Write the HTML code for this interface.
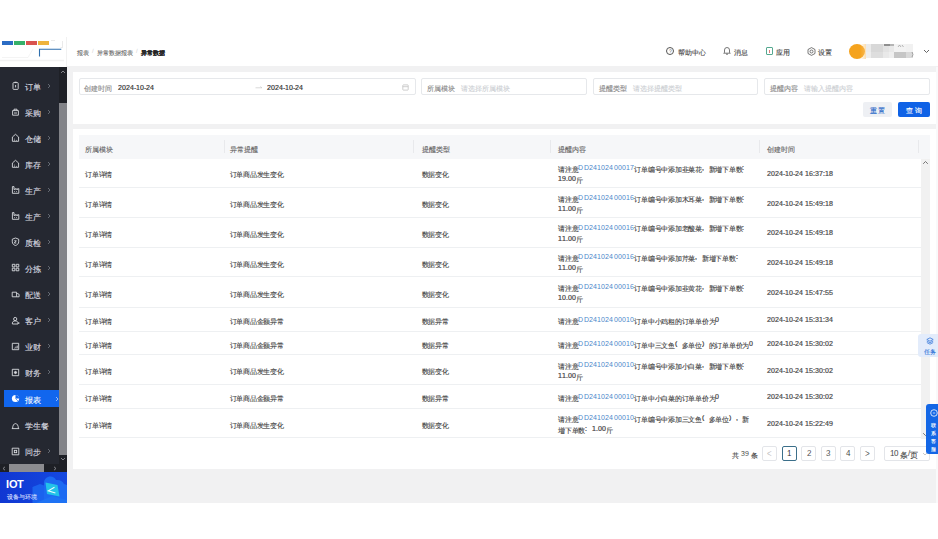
<!DOCTYPE html><html><head><meta charset="utf-8"><style>
*{margin:0;padding:0;box-sizing:border-box}
@font-face{font-family:"Liberation Sans";src:local("Liberation Sans"),local("LiberationSans");font-weight:400;unicode-range:U+0000-2FFF,U+3040-33FF,U+A000-FEFF,U+FFF0-10FFFF}
@font-face{font-family:"Liberation Sans";src:local("Liberation Sans Bold"),local("LiberationSans-Bold");font-weight:700;unicode-range:U+0000-2FFF,U+3040-33FF,U+A000-FEFF,U+FFF0-10FFFF}
@font-face{font-family:"Liberation Sans";src:local("Liberation Sans"),local("LiberationSans");font-weight:400;size-adjust:133.33%;unicode-range:U+3000-303F,U+3400-9FFF,U+FF00-FFEF}
@font-face{font-family:"Liberation Sans";src:local("Liberation Sans Bold"),local("LiberationSans-Bold");font-weight:700;size-adjust:133.33%;unicode-range:U+3000-303F,U+3400-9FFF,U+FF00-FFEF}
html,body{width:938px;height:539px;overflow:hidden;background:#fff;font-family:"Liberation Sans",sans-serif}
body{position:relative}
.a{position:absolute;white-space:nowrap}
.mi{position:absolute;left:0;width:59px;height:17px;color:#d9dbe0;font-size:8px;line-height:17px}
.mi svg{position:absolute;left:10.5px;top:4.3px}
.mi svg.ar{left:46.5px;top:5.5px}
.mi .tx{position:absolute;left:25px;top:0}
.mi .ar{position:absolute;left:46px;top:-0.5px;font-size:7px;color:#8d929c}
.mi.act{background:#1166ee;color:#fff}
.mi.act .ar{left:54px;color:#d5e4ff}
.inp{position:absolute;top:78.3px;height:17px;border:1px solid #e6e8eb;border-radius:2px;background:#fff;font-size:7px;line-height:15px;color:#333}
.inp span{top:1px!important}
.inp .lb{position:absolute;left:4.6px;top:0;color:#8a8a8a}
.inp .ph{position:absolute;top:0;color:#cdd0d4}
.btn{position:absolute;top:102px;height:15px;font-size:7px;line-height:15px;text-align:center;border-radius:2px;padding-left:1.5px}
.btn .z{letter-spacing:1.5px}
.th{position:absolute;top:135px;height:23.5px;background:#f6f7f9}
.sep{position:absolute;top:140px;width:1px;height:13px;background:#e8e9ec}
.row{position:absolute;left:79px;width:842px;border-bottom:1px solid #eef0f2}
.c{position:absolute;font-size:7px;color:#444;line-height:11px;white-space:nowrap;-webkit-text-stroke:0.22px currentColor}
.lk{color:#4a86ca;font-size:7.3px}
.c .z{letter-spacing:-0.25px;top:1.5px}
.c .p{width:6.75px}
.lk{letter-spacing:0.15px;-webkit-text-stroke:0}
.z{font-style:normal;-webkit-text-stroke:0.12px currentColor;position:relative;top:1.5px}
.inp .z,.btn .z{top:0.6px}
.mi .z{top:1.6px}
.p{font-style:normal;display:inline-block;width:1em;text-align:left}
.pg{position:absolute;top:446px;width:15px;height:15px;border:1px solid #e3e5e9;border-radius:2px;font-size:7.5px;line-height:13px;text-align:center;color:#444;background:#fff}
</style></head><body>
<div class="a" style="left:2px;top:41px;width:11px;height:4px;background:#2b6cc4"></div>
<div class="a" style="left:14px;top:41px;width:11px;height:4px;background:#35b06a"></div>
<div class="a" style="left:26px;top:41px;width:11px;height:4px;background:#d9534f"></div>
<div class="a" style="left:38px;top:41px;width:11px;height:4px;background:#efb33c"></div>
<svg class="a" style="left:0;top:36px" width="66" height="28" viewBox="0 0 66 28"><path d="M39.5 20.5V13.3H61.3" fill="none" stroke="#2f6fae" stroke-width="1.1"/><path d="M51 4.5h4 M62.5 5v6.5h-2" fill="none" stroke="#dcdcdc" stroke-width="0.6"/><path d="M2 21.5h26 L33 13" fill="none" stroke="#ececec" stroke-width="0.6"/><path d="M0 24.5h64" fill="none" stroke="#f2f2f2" stroke-width="1.5"/></svg>
<div class="a" style="left:66px;top:37px;width:1px;height:30px;background:#f1f1f1"></div>
<div class="a" style="left:77px;top:47px;font-size:6px;line-height:9px;color:#666"><i class="z">报表</i><span style="color:#d0d0d0;padding:0 3px">/</span><i class="z">异常数据报表</i><span style="color:#d0d0d0;padding:0 3px">/</span><b style="color:#222;-webkit-text-stroke:0.45px #222"><i class="z">异常数据</i></b></div>
<div class="a" style="left:666px;top:47px;width:8px;height:8px;border:0.8px solid #555;border-radius:50%;font-size:5px;line-height:6.5px;text-align:center;color:#555">?</div>
<div class="a" style="left:677.5px;top:46px;font-size:7px;line-height:10px;color:#444"><i class="z">帮助中心</i></div>
<svg class="a" style="left:723px;top:46px" width="8" height="9" viewBox="0 0 8 9"><path d="M1.5 6.5 V4 a2.5 2.5 0 0 1 5 0 V6.5 L7.3 7.2 H0.7 Z M3 8.2 h2" fill="none" stroke="#555" stroke-width="0.8"/></svg>
<div class="a" style="left:733.5px;top:46px;font-size:7px;line-height:10px;color:#444"><i class="z">消息</i></div>
<div class="a" style="left:766px;top:47px;width:7px;height:8px;border:1px solid #55a88f;border-radius:1px"></div>
<div class="a" style="left:768.8px;top:49.5px;width:1.5px;height:3.5px;background:#e07a7a"></div>
<div class="a" style="left:775.5px;top:46px;font-size:7px;line-height:10px;color:#444"><i class="z">应用</i></div>
<svg class="a" style="left:807px;top:46.5px" width="9" height="9" viewBox="0 0 9 9"><path d="M4.5 0.6 L8 2.5 V6.5 L4.5 8.4 L1 6.5 V2.5 Z" fill="none" stroke="#555" stroke-width="0.8"/><circle cx="4.5" cy="4.5" r="1.5" fill="none" stroke="#555" stroke-width="0.8"/></svg>
<div class="a" style="left:818px;top:46px;font-size:7px;line-height:10px;color:#444"><i class="z">设置</i></div>
<div class="a" style="left:849px;top:44px;width:16px;height:15px;border-radius:50%;background:#f5a31e"></div>
<div class="a" style="left:866px;top:43.8px;width:5.3px;height:7.9px;background:#ebebeb"></div>
<div class="a" style="left:871.3px;top:43.8px;width:11.5px;height:7.9px;background:#d8d8d8"></div>
<div class="a" style="left:882.8px;top:43.8px;width:6.3px;height:7.9px;background:#e3e3e3"></div>
<div class="a" style="left:889.1px;top:43.8px;width:5.2px;height:7.9px;background:#e9e9e9"></div>
<div class="a" style="left:894.3px;top:43.8px;width:11.5px;height:7.9px;background:#f3f3f3"></div>
<div class="a" style="left:905.8px;top:43.8px;width:7.3px;height:7.9px;background:#f1f1f1"></div>
<div class="a" style="left:866px;top:51.7px;width:5.3px;height:6.8px;background:#eeeeee"></div>
<div class="a" style="left:871.3px;top:51.7px;width:11.5px;height:6.8px;background:#dedede"></div>
<div class="a" style="left:882.8px;top:51.7px;width:6.3px;height:6.8px;background:#e9e9e9"></div>
<div class="a" style="left:889.1px;top:51.7px;width:5.2px;height:6.8px;background:#efefef"></div>
<div class="a" style="left:894.3px;top:51.7px;width:11.5px;height:6.8px;background:#c6c6c6"></div>
<div class="a" style="left:905.8px;top:51.7px;width:7.3px;height:6.8px;background:#d9d9d9"></div>
<div class="a" style="left:883.5px;top:44.2px;width:6px;height:2.2px;background:#8f8f8f"></div>
<div class="a" style="left:889.5px;top:44.2px;width:4.5px;height:1.8px;background:#b5b5b5"></div>
<div class="a" style="left:860px;top:44px;width:6px;height:15px;background:linear-gradient(90deg,rgba(245,163,30,0),rgba(250,200,120,.6))"></div>
<svg class="a" style="left:911px;top:51px" width="4" height="7" viewBox="0 0 4 7"><path d="M1 1 Q3 3.5 1 6" fill="none" stroke="#888" stroke-width="0.7"/></svg>
<svg class="a" style="left:897px;top:43.5px" width="8" height="4" viewBox="0 0 8 4"><path d="M1 3 L2.5 1 L4 3 M5 1 L6.5 3" fill="none" stroke="#999" stroke-width="0.7"/></svg>
<svg class="a" style="left:923px;top:49px" width="7" height="5" viewBox="0 0 7 5"><path d="M1 1 L3.5 3.5 L6 1" fill="none" stroke="#555" stroke-width="0.9"/></svg>
<div class="a" style="left:0;top:67px;width:67px;height:397px;background:#252831"></div>
<div class="a" style="left:59px;top:67px;width:8px;height:397px;background:#1e2026"></div>
<div class="a" style="left:59px;top:102.5px;width:8px;height:352px;background:#828388"></div>
<svg class="a" style="left:60px;top:70px" width="6" height="4" viewBox="0 0 6 4"><path d="M1 3 L3 1 L5 3" fill="none" stroke="#9a9ca2" stroke-width="0.8"/></svg>
<svg class="a" style="left:60px;top:457px" width="6" height="4" viewBox="0 0 6 4"><path d="M1 1 L3 3 L5 1" fill="none" stroke="#9a9ca2" stroke-width="0.8"/></svg>
<div class="a" style="left:0;top:464px;width:67px;height:8px;background:#1e2026"></div>
<div class="a" style="left:9px;top:464px;width:35px;height:8px;background:#8c8c90"></div>
<svg class="a" style="left:2px;top:466px" width="4" height="5" viewBox="0 0 4 5"><path d="M3 0.8 L1 2.5 L3 4.2" fill="none" stroke="#9a9ca2" stroke-width="0.8"/></svg>
<svg class="a" style="left:53px;top:466px" width="4" height="5" viewBox="0 0 4 5"><path d="M1 0.8 L3 2.5 L1 4.2" fill="none" stroke="#9a9ca2" stroke-width="0.8"/></svg>
<div class="mi" style="top:77.0px"><svg width="9" height="9" viewBox="0 0 9 9"><g fill="none" stroke="#e4e6ea" stroke-width="0.85"><rect x="2" y="1.6" width="5.2" height="6.8" rx="0.7"/><path d="M3.6 1.2h2 M4.6 4v2.4"/></g></svg><span class="tx"><i class="z">订单</i></span><svg class="ar" width="4" height="6" viewBox="0 0 4 6"><path d="M1 1L3 3 1 5" fill="none" stroke="#80858f" stroke-width="0.7"/></svg></div>
<div class="mi" style="top:103.0px"><svg width="9" height="9" viewBox="0 0 9 9"><g fill="none" stroke="#e4e6ea" stroke-width="0.85"><path d="M1.6 3.6h5.8v4.6H1.6z M3 3.6V2.2h3v1.4 M3 6h3"/></g></svg><span class="tx"><i class="z">采购</i></span><svg class="ar" width="4" height="6" viewBox="0 0 4 6"><path d="M1 1L3 3 1 5" fill="none" stroke="#80858f" stroke-width="0.7"/></svg></div>
<div class="mi" style="top:129.0px"><svg width="9" height="9" viewBox="0 0 9 9"><g fill="none" stroke="#e4e6ea" stroke-width="0.85"><path d="M1.4 8.3V4L4.5 1.3 7.6 4v4.3z"/><path d="M3.1 6.1h.6 M3.1 7.4h.6 M5.2 7.4h.6" stroke-width="0.9"/></g></svg><span class="tx"><i class="z">仓储</i></span><svg class="ar" width="4" height="6" viewBox="0 0 4 6"><path d="M1 1L3 3 1 5" fill="none" stroke="#80858f" stroke-width="0.7"/></svg></div>
<div class="mi" style="top:155.0px"><svg width="9" height="9" viewBox="0 0 9 9"><g fill="none" stroke="#e4e6ea" stroke-width="0.85"><path d="M1.4 8.3V4L4.5 1.3 7.6 4v4.3z"/><path d="M3.1 6.1h.6 M3.1 7.4h.6 M5.2 7.4h.6" stroke-width="0.9"/></g></svg><span class="tx"><i class="z">库存</i></span><svg class="ar" width="4" height="6" viewBox="0 0 4 6"><path d="M1 1L3 3 1 5" fill="none" stroke="#80858f" stroke-width="0.7"/></svg></div>
<div class="mi" style="top:181.0px"><svg width="9" height="9" viewBox="0 0 9 9"><g fill="none" stroke="#e4e6ea" stroke-width="0.85"><path d="M1.4 1.6V8.3h6.4V3.6L6.3 4.6V3.6L4.8 4.6V3.6L3 4.6V1.6z"/><path d="M3 6.6h.7 M5.2 6.6h.7" stroke-width="0.9"/></g></svg><span class="tx"><i class="z">生产</i></span><svg class="ar" width="4" height="6" viewBox="0 0 4 6"><path d="M1 1L3 3 1 5" fill="none" stroke="#80858f" stroke-width="0.7"/></svg></div>
<div class="mi" style="top:207.0px"><svg width="9" height="9" viewBox="0 0 9 9"><g fill="none" stroke="#e4e6ea" stroke-width="0.85"><path d="M1.4 1.6V8.3h6.4V3.6L6.3 4.6V3.6L4.8 4.6V3.6L3 4.6V1.6z"/><path d="M3 6.6h.7 M5.2 6.6h.7" stroke-width="0.9"/></g></svg><span class="tx"><i class="z">生产</i></span><svg class="ar" width="4" height="6" viewBox="0 0 4 6"><path d="M1 1L3 3 1 5" fill="none" stroke="#80858f" stroke-width="0.7"/></svg></div>
<div class="mi" style="top:233.0px"><svg width="9" height="9" viewBox="0 0 9 9"><g fill="none" stroke="#e4e6ea" stroke-width="0.85"><path d="M4.5 1L7.7 2.2v2.6c0 2-1.5 3.2-3.2 3.7C2.8 8 1.3 6.8 1.3 4.8V2.2z M3.3 3.8h2l-2 2.2h2"/></g></svg><span class="tx"><i class="z">质检</i></span><svg class="ar" width="4" height="6" viewBox="0 0 4 6"><path d="M1 1L3 3 1 5" fill="none" stroke="#80858f" stroke-width="0.7"/></svg></div>
<div class="mi" style="top:259.0px"><svg width="9" height="9" viewBox="0 0 9 9"><g fill="none" stroke="#e4e6ea" stroke-width="0.85"><path d="M1.3 1.3h2.6v2.6H1.3z M5.2 1.3h2.6v2.6H5.2z M1.3 5.2h2.6v2.6H1.3z M5.2 5.2h2.6v2.6H5.2z"/></g></svg><span class="tx"><i class="z">分拣</i></span><svg class="ar" width="4" height="6" viewBox="0 0 4 6"><path d="M1 1L3 3 1 5" fill="none" stroke="#80858f" stroke-width="0.7"/></svg></div>
<div class="mi" style="top:285.3px"><svg width="9" height="9" viewBox="0 0 9 9"><g fill="none" stroke="#e4e6ea" stroke-width="0.85"><path d="M1.2 2.2h4.4v4.6H1.2z M5.6 3.6h1.3c.7 0 1.2.6 1.2 1.3v1.9H5.6"/></g></svg><span class="tx"><i class="z">配送</i></span><svg class="ar" width="4" height="6" viewBox="0 0 4 6"><path d="M1 1L3 3 1 5" fill="none" stroke="#80858f" stroke-width="0.7"/></svg></div>
<div class="mi" style="top:311.5px"><svg width="9" height="9" viewBox="0 0 9 9"><g fill="none" stroke="#e4e6ea" stroke-width="0.85"><circle cx="4.2" cy="3" r="1.6"/><path d="M1.4 8V7c0-1.2 1-2 2.3-2h1c1.3 0 2.3.8 2.3 2v1z M7.8 6.2V8"/></g></svg><span class="tx"><i class="z">客户</i></span><svg class="ar" width="4" height="6" viewBox="0 0 4 6"><path d="M1 1L3 3 1 5" fill="none" stroke="#80858f" stroke-width="0.7"/></svg></div>
<div class="mi" style="top:337.5px"><svg width="9" height="9" viewBox="0 0 9 9"><g fill="none" stroke="#e4e6ea" stroke-width="0.85"><path d="M1.3 1.3h6.4v6.4H1.3z M3.5 6.4v-.6 M4.9 6.4V4.6 M6.2 6.4V3.6"/></g></svg><span class="tx"><i class="z">业财</i></span><svg class="ar" width="4" height="6" viewBox="0 0 4 6"><path d="M1 1L3 3 1 5" fill="none" stroke="#80858f" stroke-width="0.7"/></svg></div>
<div class="mi" style="top:363.8px"><svg width="9" height="9" viewBox="0 0 9 9"><g fill="none" stroke="#e4e6ea" stroke-width="0.85"><path d="M1.3 1.3h6.4v6.4H1.3z"/><circle cx="4.5" cy="4.5" r="1.1" fill="#d9dbe0"/></g></svg><span class="tx"><i class="z">财务</i></span><svg class="ar" width="4" height="6" viewBox="0 0 4 6"><path d="M1 1L3 3 1 5" fill="none" stroke="#80858f" stroke-width="0.7"/></svg></div>
<div class="mi act" style="left:4px;top:390px;width:55px;height:17px"><svg style="left:7px;top:4.3px" width="9" height="9" viewBox="0 0 9 9"><circle cx="4.5" cy="4.5" r="3.6" fill="#fff"/><path d="M4.5 4.5V0.9 A3.6 3.6 0 0 1 8.1 4.5Z" fill="#1166ee"/><path d="M4.5 4.5L7 7" stroke="#1166ee" stroke-width="0.6"/></svg><span class="tx" style="left:21px"><i class="z">报表</i></span><svg class="ar" style="left:50.5px" width="4" height="6" viewBox="0 0 4 6"><path d="M1 1L3 3 1 5" fill="none" stroke="#cfe0ff" stroke-width="0.7"/></svg></div>
<div class="mi" style="top:416.5px"><svg width="9" height="9" viewBox="0 0 9 9"><g fill="none" stroke="#e4e6ea" stroke-width="0.85"><path d="M0.8 7.6h7.4 M1.6 7.6C1.6 4.4 2.9 2.6 4.5 2.6S7.4 4.4 7.4 7.6"/></g></svg><span class="tx"><i class="z">学生餐</i></span></div>
<div class="mi" style="top:442.5px"><svg width="9" height="9" viewBox="0 0 9 9"><g fill="none" stroke="#e4e6ea" stroke-width="0.85"><path d="M1.2 1.2h6.6v6.6H1.2z"/><rect x="3.3" y="3.3" width="2.4" height="2.4"/></g></svg><span class="tx"><i class="z">同步</i></span><svg class="ar" width="4" height="6" viewBox="0 0 4 6"><path d="M1 1L3 3 1 5" fill="none" stroke="#80858f" stroke-width="0.7"/></svg></div>
<div class="a" style="left:0;top:472px;width:67px;height:30.5px;background:linear-gradient(90deg,#1037d2,#1549e0);overflow:hidden"><svg class="a" style="left:0;top:0" width="67" height="31" viewBox="0 0 67 31"><path d="M32.5 31 V15 L40 12 L47 14.5 V31Z" fill="#1a62ee"/><path d="M44 31 V11 C44 7 47 4.5 50.5 4.5 C53 4.5 55 6 56 8 C60 7.5 63 9.5 64 12 L67 13 V31Z" fill="#1c6af2"/><path d="M36 31 L52 24 L67 28 V31Z" fill="#1e72f4"/><path d="M45.5 10.5 L57.5 13 L59.5 24.5 L47 22Z" fill="#23c3e8"/><path d="M54.5 15.3 L48.3 18.8 L55.4 21" fill="none" stroke="#e8fbff" stroke-width="1.1"/></svg><div class="a" style="left:6px;top:7px;font-size:10.5px;line-height:11px;font-weight:bold;color:#fff;letter-spacing:-0.3px">IOT</div><div class="a" style="left:6.5px;top:20px;font-size:5.6px;line-height:7px;color:#cfdcff"><i class="z">设备与环境</i></div></div>
<div class="a" style="left:67px;top:65.5px;width:871px;height:437px;background:#f1f1f2"></div>
<div class="a" style="left:935.5px;top:67px;width:2.5px;height:435.5px;background:#f9f9fa"></div>
<div class="a" style="left:73px;top:71.5px;width:862.5px;height:52px;background:#fff"></div>
<div class="inp" style="left:78.5px;width:337.5px"><span class="lb" style="left:4.5px"><i class="z">创建时间</i></span><span class="a" style="left:38.2px;top:0;letter-spacing:0.05px;color:#333;-webkit-text-stroke:0.2px #333">2024-10-24</span><svg class="a" style="left:175.5px;top:7px" width="8" height="3" viewBox="0 0 8 3"><path d="M0.5 1.8H7 M5.3 0.6L7 1.8" fill="none" stroke="#c8c8c8" stroke-width="0.7"/></svg><span class="a" style="left:187.2px;top:0;letter-spacing:0.05px;color:#333;-webkit-text-stroke:0.2px #333">2024-10-24</span><svg class="a" style="left:322.7px;top:4.5px" width="7" height="7" viewBox="0 0 7 7"><rect x="0.8" y="0.9" width="5.4" height="5.2" rx="0.6" fill="none" stroke="#c2c2c2" stroke-width="0.8"/><path d="M0.8 2.7h5.4" stroke="#c2c2c2" stroke-width="0.8"/></svg></div>
<div class="inp" style="left:421px;width:165.5px"><span class="lb"><i class="z">所属模块</i></span><span class="ph" style="left:38.5px"><i class="z">请选择所属模块</i></span></div>
<div class="inp" style="left:593px;width:164.5px"><span class="lb"><i class="z">提醒类型</i></span><span class="ph" style="left:38.5px"><i class="z">请选择提醒类型</i></span></div>
<div class="inp" style="left:764px;width:165.5px"><span class="lb"><i class="z">提醒内容</i></span><span class="ph" style="left:38.5px"><i class="z">请输入提醒内容</i></span></div>
<div class="btn" style="left:863px;width:29px;background:#eef0f4;color:#2566c8"><i class="z">重置</i></div>
<div class="btn" style="left:898px;width:31.5px;background:#0f62e6;color:#fff"><i class="z">查询</i></div>
<div class="a" style="left:73px;top:128.7px;width:862.5px;height:340.3px;background:#fff"></div>
<div class="th" style="left:79px;width:851px"></div>
<div class="a" style="left:85px;top:142.3px;font-size:7px;line-height:11px;color:#666"><i class="z">所属模块</i></div>
<div class="a" style="left:229.6px;top:142.3px;font-size:7px;line-height:11px;color:#666"><i class="z">异常提醒</i></div>
<div class="a" style="left:421.5px;top:142.3px;font-size:7px;line-height:11px;color:#666"><i class="z">提醒类型</i></div>
<div class="a" style="left:558.2px;top:142.3px;font-size:7px;line-height:11px;color:#666"><i class="z">提醒内容</i></div>
<div class="a" style="left:767px;top:142.3px;font-size:7px;line-height:11px;color:#666"><i class="z">创建时间</i></div>
<div class="sep" style="left:223.5px"></div>
<div class="sep" style="left:413px"></div>
<div class="sep" style="left:549.7px"></div>
<div class="sep" style="left:758.5px"></div>
<div class="sep" style="left:918px"></div>
<div class="a" style="left:921px;top:158.5px;width:8.5px;height:280px;background:#f1f1f1"></div>
<svg class="a" style="left:922px;top:160px" width="7" height="5" viewBox="0 0 7 5"><path d="M1.2 3.8 L3.5 1.5 L5.8 3.8" fill="none" stroke="#666" stroke-width="0.9"/></svg>
<svg class="a" style="left:922px;top:432px" width="7" height="5" viewBox="0 0 7 5"><path d="M1.2 1.2 L3.5 3.5 L5.8 1.2" fill="none" stroke="#666" stroke-width="0.9"/></svg>
<div class="row" style="top:158.6px;height:29.7px"></div>
<div class="c" style="left:85px;top:167.95px"><i class="z">订单详情</i></div>
<div class="c" style="left:229.5px;top:167.95px"><i class="z">订单商品发生变化</i></div>
<div class="c" style="left:421.5px;top:167.95px"><i class="z">数据变化</i></div>
<div class="c" style="left:558.2px;top:162.35px"><i class="z">请注意</i><span class="lk">DD24102400017</span><i class="z">订单编号中添加韭菜花</i><i class="p">,</i><i class="z">新增下单数</i><i class="p">:</i><br>19.00<i class="z">斤</i></div>
<div class="c" style="left:767.0px;top:167.95px;color:#4a4a4a">2024-10-24 16:37:18</div>
<div class="row" style="top:188.3px;height:29.7px"></div>
<div class="c" style="left:85px;top:197.65px"><i class="z">订单详情</i></div>
<div class="c" style="left:229.5px;top:197.65px"><i class="z">订单商品发生变化</i></div>
<div class="c" style="left:421.5px;top:197.65px"><i class="z">数据变化</i></div>
<div class="c" style="left:558.2px;top:192.05px"><i class="z">请注意</i><span class="lk">DD24102400016</span><i class="z">订单编号中添加木耳菜</i><i class="p">,</i><i class="z">新增下单数</i><i class="p">:</i><br>11.00<i class="z">斤</i></div>
<div class="c" style="left:767.0px;top:197.65px;color:#4a4a4a">2024-10-24 15:49:18</div>
<div class="row" style="top:218px;height:29.7px"></div>
<div class="c" style="left:85px;top:227.35px"><i class="z">订单详情</i></div>
<div class="c" style="left:229.5px;top:227.35px"><i class="z">订单商品发生变化</i></div>
<div class="c" style="left:421.5px;top:227.35px"><i class="z">数据变化</i></div>
<div class="c" style="left:558.2px;top:221.75px"><i class="z">请注意</i><span class="lk">DD24102400016</span><i class="z">订单编号中添加老酸菜</i><i class="p">,</i><i class="z">新增下单数</i><i class="p">:</i><br>11.00<i class="z">斤</i></div>
<div class="c" style="left:767.0px;top:227.35px;color:#4a4a4a">2024-10-24 15:49:18</div>
<div class="row" style="top:247.7px;height:29.7px"></div>
<div class="c" style="left:85px;top:257.05px"><i class="z">订单详情</i></div>
<div class="c" style="left:229.5px;top:257.05px"><i class="z">订单商品发生变化</i></div>
<div class="c" style="left:421.5px;top:257.05px"><i class="z">数据变化</i></div>
<div class="c" style="left:558.2px;top:251.45000000000002px"><i class="z">请注意</i><span class="lk">DD24102400016</span><i class="z">订单编号中添加芹菜</i><i class="p">,</i><i class="z">新增下单数</i><i class="p">:</i><br>11.00<i class="z">斤</i></div>
<div class="c" style="left:767.0px;top:257.05px;color:#4a4a4a">2024-10-24 15:49:18</div>
<div class="row" style="top:277.4px;height:30.3px"></div>
<div class="c" style="left:85px;top:287.04999999999995px"><i class="z">订单详情</i></div>
<div class="c" style="left:229.5px;top:287.04999999999995px"><i class="z">订单商品发生变化</i></div>
<div class="c" style="left:421.5px;top:287.04999999999995px"><i class="z">数据变化</i></div>
<div class="c" style="left:558.2px;top:281.44999999999993px"><i class="z">请注意</i><span class="lk">DD24102400016</span><i class="z">订单编号中添加韭黄花</i><i class="p">,</i><i class="z">新增下单数</i><i class="p">:</i><br>10.00<i class="z">斤</i></div>
<div class="c" style="left:767.0px;top:287.04999999999995px;color:#4a4a4a">2024-10-24 15:47:55</div>
<div class="row" style="top:307.7px;height:24.0px"></div>
<div class="c" style="left:85px;top:314.2px"><i class="z">订单详情</i></div>
<div class="c" style="left:229.5px;top:314.2px"><i class="z">订单商品金额异常</i></div>
<div class="c" style="left:421.5px;top:314.2px"><i class="z">数据异常</i></div>
<div class="c" style="left:558.2px;top:314.2px"><i class="z">请注意</i><span class="lk">DD24102400010</span><i class="z">订单中小鸡粗的订单单价为</i>0</div>
<div class="c" style="left:767.0px;top:314.2px;color:#4a4a4a">2024-10-24 15:31:34</div>
<div class="row" style="top:331.7px;height:23.7px"></div>
<div class="c" style="left:85px;top:338.05px"><i class="z">订单详情</i></div>
<div class="c" style="left:229.5px;top:338.05px"><i class="z">订单商品金额异常</i></div>
<div class="c" style="left:421.5px;top:338.05px"><i class="z">数据异常</i></div>
<div class="c" style="left:558.2px;top:338.05px"><i class="z">请注意</i><span class="lk">DD24102400010</span><i class="z">订单中三文鱼</i><i class="p">(</i><i class="z">多单位</i><i class="p">)</i><i class="z">的订单单价为</i>0</div>
<div class="c" style="left:767.0px;top:338.05px;color:#4a4a4a">2024-10-24 15:30:02</div>
<div class="row" style="top:355.4px;height:29.6px"></div>
<div class="c" style="left:85px;top:364.7px"><i class="z">订单详情</i></div>
<div class="c" style="left:229.5px;top:364.7px"><i class="z">订单商品发生变化</i></div>
<div class="c" style="left:421.5px;top:364.7px"><i class="z">数据变化</i></div>
<div class="c" style="left:558.2px;top:359.09999999999997px"><i class="z">请注意</i><span class="lk">DD24102400010</span><i class="z">订单编号中添加小白菜</i><i class="p">,</i><i class="z">新增下单数</i><i class="p">:</i><br>11.00<i class="z">斤</i></div>
<div class="c" style="left:767.0px;top:364.7px;color:#4a4a4a">2024-10-24 15:30:02</div>
<div class="row" style="top:385px;height:23.7px"></div>
<div class="c" style="left:85px;top:391.35px"><i class="z">订单详情</i></div>
<div class="c" style="left:229.5px;top:391.35px"><i class="z">订单商品金额异常</i></div>
<div class="c" style="left:421.5px;top:391.35px"><i class="z">数据异常</i></div>
<div class="c" style="left:558.2px;top:391.35px"><i class="z">请注意</i><span class="lk">DD24102400010</span><i class="z">订单中小白菜的订单单价为</i>0</div>
<div class="c" style="left:767.0px;top:391.35px;color:#4a4a4a">2024-10-24 15:30:02</div>
<div class="row" style="top:408.7px;height:29.7px"></div>
<div class="c" style="left:85px;top:418.05px"><i class="z">订单详情</i></div>
<div class="c" style="left:229.5px;top:418.05px"><i class="z">订单商品发生变化</i></div>
<div class="c" style="left:421.5px;top:418.05px"><i class="z">数据变化</i></div>
<div class="c" style="left:558.2px;top:412.45px"><i class="z">请注意</i><span class="lk">DD24102400010</span><i class="z">订单编号中添加三文鱼</i><i class="p">(</i><i class="z">多单位</i><i class="p">)</i><i class="p">,</i><i class="z">新</i><br><i class="z">增下单数</i><i class="p">:</i>1.00<i class="z">斤</i></div>
<div class="c" style="left:767.0px;top:418.05px;color:#4a4a4a">2024-10-24 15:22:49</div>
<div class="a" style="left:732px;top:449px;font-size:7px;line-height:10px;color:#444"><i class="z">共</i> 39 <i class="z">条</i></div>
<div class="pg" style="left:762px;color:#bbb;">&lt;</div>
<div class="pg" style="left:781.5px;border-color:#3b6f8a;color:#333;">1</div>
<div class="pg" style="left:801px;">2</div>
<div class="pg" style="left:820.5px;">3</div>
<div class="pg" style="left:840px;">4</div>
<div class="pg" style="left:859.5px;">&gt;</div>
<div class="pg" style="left:883.5px;width:46px;text-align:left;padding-left:5px">10 <i class="z">条</i>/<i class="z">页</i><svg class="a" style="left:37px;top:5px" width="6" height="4" viewBox="0 0 6 4"><path d="M1 1 L3 3 L5 1" fill="none" stroke="#bbb" stroke-width="0.8"/></svg></div>
<div class="a" style="left:918px;top:334px;width:20px;height:22.5px;background:#e3ecfb;border-radius:3px 0 0 3px"></div>
<svg class="a" style="left:925.9px;top:336.6px" width="8" height="8" viewBox="0 0 8 8"><path d="M4 0.8L7.2 2.5 4 4.2 0.8 2.5Z M0.8 4L4 5.7 7.2 4 M0.8 5.5L4 7.2 7.2 5.5" fill="none" stroke="#2f73d8" stroke-width="0.75"/></svg>
<div class="a" style="left:924.3px;top:346.5px;font-size:5.5px;line-height:8px;color:#2f73d8"><i class="z">任务</i></div>
<div class="a" style="left:926.3px;top:404.2px;width:11.7px;height:49.8px;background:#1467e6;border-radius:3px 0 0 3px"></div>
<svg class="a" style="left:929.6px;top:409px" width="8" height="8" viewBox="0 0 8 8"><circle cx="4" cy="4" r="3.3" fill="none" stroke="#fff" stroke-width="0.8"/><path d="M2.8 4h2.4" stroke="#fff" stroke-width="0.7"/></svg>
<div class="a" style="left:931px;top:419.5px;font-size:5.4px;line-height:8px;color:#fff"><i class="z">联</i></div>
<div class="a" style="left:931px;top:427.5px;font-size:5.4px;line-height:8px;color:#fff"><i class="z">系</i></div>
<div class="a" style="left:931px;top:435.5px;font-size:5.4px;line-height:8px;color:#fff"><i class="z">客</i></div>
<div class="a" style="left:931px;top:443.5px;font-size:5.4px;line-height:8px;color:#fff"><i class="z">服</i></div>
</body></html>
